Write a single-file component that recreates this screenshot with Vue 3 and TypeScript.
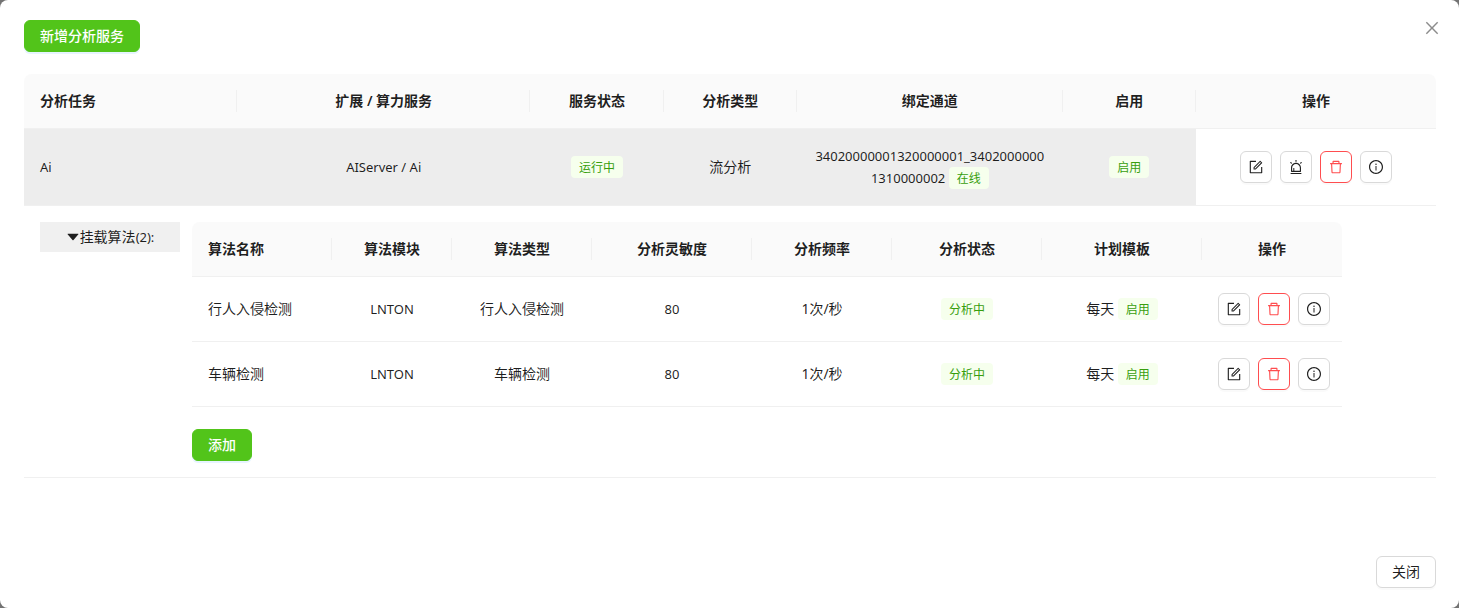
<script setup lang="ts">
import { ref } from 'vue'

type IconName = 'form' | 'alert' | 'delete' | 'info'

interface Action {
  icon: IconName
  label: string
}

interface Algorithm {
  name: string
  module: string
  type: string
  sensitivity: number
  frequency: string
  status: string
  plan: string
  planState: string
}

const icons: Record<IconName, string[]> = {
  form: [
    'M904 512h-56c-4.4 0-8 3.6-8 8v320H184V184h320c4.4 0 8-3.6 8-8v-56c0-4.4-3.6-8-8-8H144c-17.7 0-32 14.3-32 32v736c0 17.7 14.3 32 32 32h736c17.7 0 32-14.3 32-32V520c0-4.4-3.6-8-8-8z',
    'M355.9 534.9L354 653.8c-.1 8.9 7.1 16.2 16 16.2h.4l118-2.9c2-.1 4-.9 5.4-2.3l415.9-415c3.1-3.1 3.1-8.2 0-11.3L785.4 114.3c-1.6-1.6-3.6-2.3-5.7-2.3s-4.1.8-5.7 2.3l-415.8 415a8.3 8.3 0 00-2.3 5.6zm63.5 23.6L779.7 199l45.2 45.1-360.5 359.7-45.7 1.1.7-46.4z',
  ],
  alert: [
    'M193 796c0 17.7 14.3 32 32 32h574c17.7 0 32-14.3 32-32V563c0-176.2-142.8-319-319-319S193 386.8 193 563v233zm72-233c0-136.4 110.6-247 247-247s247 110.6 247 247v193H404V585c0-5.5-4.5-10-10-10h-44c-5.5 0-10 4.5-10 10v171h-75V563zm-48.1-252.5l39.6-39.6c3.1-3.1 3.1-8.2 0-11.3l-67.9-67.9c-3.1-3.1-8.2-3.1-11.3 0l-39.6 39.6a8.03 8.03 0 000 11.3l67.9 67.9c3.1 3.1 8.1 3.1 11.3 0zm669.6-79.2l-39.6-39.6c-3.1-3.1-8.2-3.1-11.3 0l-67.9 67.9a8.03 8.03 0 000 11.3l39.6 39.6c3.1 3.1 8.2 3.1 11.3 0l67.9-67.9c3.1-3.2 3.1-8.2 0-11.3zM832 892H192c-17.7 0-32 14.3-32 32v24c0 4.4 3.6 8 8 8h688c4.4 0 8-3.6 8-8v-24c0-17.7-14.3-32-32-32zM484 180h56c4.4 0 8-3.6 8-8V76c0-4.4-3.6-8-8-8h-56c-4.4 0-8 3.6-8 8v96c0 4.4 3.6 8 8 8z',
  ],
  delete: [
    'M360 184h-8c4.4 0 8-3.6 8-8v8h304v-8c0 4.4 3.6 8 8 8h-8v72h72v-80c0-35.3-28.7-64-64-64H352c-35.3 0-64 28.7-64 64v80h72v-72zm504 72H160c-17.7 0-32 14.3-32 32v32c0 4.4 3.6 8 8 8h60.4l24.7 523c1.6 34.1 29.8 61 63.9 61h454c34.2 0 62.3-26.8 63.9-61l24.7-523H888c4.4 0 8-3.6 8-8v-32c0-17.7-14.3-32-32-32zM731.3 840H292.7l-24.2-512h487l-24.2 512z',
  ],
  info: [
    'M512 64C264.6 64 64 264.6 64 512s200.6 448 448 448 448-200.6 448-448S759.4 64 512 64zm0 820c-205.4 0-372-166.6-372-372s166.6-372 372-372 372 166.6 372 372-166.6 372-372 372z',
    'M464 336a48 48 0 1096 0 48 48 0 10-96 0zm72 112h-48c-4.4 0-8 3.6-8 8v272c0 4.4 3.6 8 8 8h48c4.4 0 8-3.6 8-8V456c0-4.4-3.6-8-8-8z',
  ],
}

const taskActions: Action[] = [
  { icon: 'form', label: '编辑' },
  { icon: 'alert', label: '告警' },
  { icon: 'delete', label: '删除' },
  { icon: 'info', label: '详情' },
]
const algorithmActions = taskActions.filter((a) => a.icon !== 'alert')

const taskColumns = ['分析任务', '扩展 / 算力服务', '服务状态', '分析类型', '绑定通道', '启用', '操作']
const algorithmColumns = ['算法名称', '算法模块', '算法类型', '分析灵敏度', '分析频率', '分析状态', '计划模板', '操作']

const algorithms: Algorithm[] = ['行人入侵检测', '车辆检测'].map((name) => ({
  name,
  module: 'LNTON',
  type: name,
  sensitivity: 80,
  frequency: '1次/秒',
  status: '分析中',
  plan: '每天',
  planState: '启用',
}))

const expanded = ref(true)
</script>

<template>
  <main class="dialog" role="dialog" aria-label="分析服务">
    <header class="dialog-head">
      <button type="button" class="btn primary">新增分析服务</button>
      <button type="button" class="close" aria-label="关闭窗口">
        <svg viewBox="64 64 896 896" width="16" height="16" aria-hidden="true">
          <path d="M799.9 166.3l57.8 57.9L569.9 512l287.8 287.8-57.8 57.9L512 569.9 224.2 857.7l-57.9-57.9L454.1 512 166.3 224.2l57.9-57.9L512 454.1z" />
        </svg>
      </button>
    </header>

    <table class="grid tasks">
      <colgroup>
        <col class="c-task" />
        <col class="c-server" />
        <col class="c-small" />
        <col class="c-small" />
        <col />
        <col class="c-small" />
        <col class="c-actions" />
      </colgroup>
      <thead>
        <tr>
          <th v-for="title in taskColumns" :key="title" scope="col">{{ title }}</th>
        </tr>
      </thead>
      <tbody>
        <tr class="task-row">
          <td class="latin">Ai</td>
          <td class="latin">AIServer / Ai</td>
          <td><span class="tag">运行中</span></td>
          <td>流分析</td>
          <td class="latin channel">34020000001320000001_34020000001310000002 <span class="tag">在线</span></td>
          <td><span class="tag">启用</span></td>
          <td>
            <div class="actions">
              <button
                v-for="action in taskActions"
                :key="action.icon"
                type="button"
                class="icon-btn"
                :class="{ danger: action.icon === 'delete' }"
                :aria-label="action.label"
              >
                <svg viewBox="64 64 896 896" width="14" height="14" aria-hidden="true">
                  <path v-for="d in icons[action.icon]" :key="d" :d="d" />
                </svg>
              </button>
            </div>
          </td>
        </tr>
        <tr>
          <td colspan="7" class="detail-cell">
            <div class="detail">
              <button type="button" class="toggle" :aria-expanded="expanded" @click="expanded = !expanded">
                <svg viewBox="64 64 896 896" width="14" height="14" :class="{ folded: !expanded }" aria-hidden="true">
                  <path d="M840.4 300H183.6c-19.7 0-30.7 20.8-18.5 35l328.4 380.8c9.4 10.9 27.5 10.9 37 0L858.9 335c12.2-14.2 1.1-35-18.5-35z" />
                </svg>
                <span>挂载算法<span class="latin">({{ algorithms.length }}):</span></span>
              </button>
              <div v-if="expanded" class="detail-body">
                <table class="grid algorithms">
                  <colgroup>
                    <col class="w140" />
                    <col class="w120" />
                    <col class="w140" />
                    <col class="w160" />
                    <col class="w140" />
                    <col class="w150" />
                    <col class="w160" />
                    <col class="w140" />
                  </colgroup>
                  <thead>
                    <tr>
                      <th v-for="title in algorithmColumns" :key="title" scope="col">{{ title }}</th>
                    </tr>
                  </thead>
                  <tbody>
                    <tr v-for="item in algorithms" :key="item.name">
                      <td>{{ item.name }}</td>
                      <td class="latin">{{ item.module }}</td>
                      <td>{{ item.type }}</td>
                      <td class="latin">{{ item.sensitivity }}</td>
                      <td>{{ item.frequency }}</td>
                      <td><span class="tag">{{ item.status }}</span></td>
                      <td>{{ item.plan }} <span class="tag">{{ item.planState }}</span></td>
                      <td>
                        <div class="actions">
                          <button
                            v-for="action in algorithmActions"
                            :key="action.icon"
                            type="button"
                            class="icon-btn"
                            :class="{ danger: action.icon === 'delete' }"
                            :aria-label="action.label"
                          >
                            <svg viewBox="64 64 896 896" width="14" height="14" aria-hidden="true">
                              <path v-for="d in icons[action.icon]" :key="d" :d="d" />
                            </svg>
                          </button>
                        </div>
                      </td>
                    </tr>
                  </tbody>
                </table>
                <button type="button" class="btn primary">添加</button>
              </div>
            </div>
          </td>
        </tr>
      </tbody>
    </table>

    <footer class="dialog-foot">
      <button type="button" class="btn">关闭</button>
    </footer>
  </main>
</template>

<style>
body {
  background: #737373;
}
</style>

<style scoped>
.dialog {
  box-sizing: border-box;
  min-height: 100vh;
  display: flex;
  flex-direction: column;
  padding: 20px 23px 20px 24px;
  background: #fff;
  border-radius: 8px;
  color: rgba(0, 0, 0, 0.88);
  font: 14px/22px "Noto Sans", "Noto Sans CJK SC", sans-serif;
}
button {
  font: inherit;
  color: inherit;
  cursor: pointer;
}
svg {
  display: block;
  flex: none;
  fill: currentColor;
}
.dialog-head {
  display: flex;
  justify-content: space-between;
  align-items: flex-start;
  margin-bottom: 22px;
}
.btn {
  box-sizing: border-box;
  height: 32px;
  padding: 0 15px;
  border: 1px solid #d9d9d9;
  border-radius: 6px;
  background: #fff;
  box-shadow: 0 2px 0 rgba(0, 0, 0, 0.02);
}
.btn.primary {
  border-color: #52c41a;
  background: #52c41a;
  color: #fff;
  font-weight: 500;
  box-shadow: 0 2px 0 rgba(5, 145, 255, 0.1);
}
.close {
  padding: 0;
  margin-right: -4px;
  border: 0;
  background: none;
  color: rgba(0, 0, 0, 0.45);
}

.grid {
  table-layout: fixed;
  border-collapse: separate;
  border-spacing: 0;
}
.tasks {
  width: 100%;
}
.c-task { width: 15.1%; }
.c-server { width: 20.75%; }
.c-small { width: 9.45%; }
.c-actions { width: 240px; }
.w120 { width: 120px; }
.w140 { width: 140px; }
.w150 { width: 150px; }
.w160 { width: 160px; }
.algorithms {
  width: 1150px;
  margin-bottom: 22px;
}
th,
td {
  padding: 16px;
  border-bottom: 1px solid #f0f0f0;
  text-align: center;
  overflow-wrap: break-word;
}
th {
  position: relative;
  background: #fafafa;
  font-weight: 600;
}
th:first-child,
td:first-child {
  text-align: left;
}
th:first-child {
  border-top-left-radius: 8px;
}
th:last-child {
  border-top-right-radius: 8px;
}
/* short divider between header cells */
th:not(:last-child)::before {
  content: "";
  position: absolute;
  top: 16px;
  right: 0;
  width: 1px;
  height: 22px;
  background: #f0f0f0;
}
.task-row td:not(:last-child) {
  background: #ededed;
}
.latin {
  font-size: 13px;
}
.channel {
  word-break: break-all;
}
.tag {
  box-sizing: border-box;
  display: inline-block;
  vertical-align: top;
  height: 22px;
  padding: 1px 8px 0;
  border-radius: 4px;
  background: #f6ffed;
  color: #389e0d;
  font-size: 12px;
  line-height: 22px;
  white-space: nowrap;
}
.actions {
  display: flex;
  justify-content: safe center;
  gap: 8px;
}
.icon-btn {
  box-sizing: border-box;
  flex: none;
  display: flex;
  align-items: center;
  justify-content: center;
  width: 32px;
  height: 32px;
  padding: 0;
  border: 1px solid #d9d9d9;
  border-radius: 6px;
  background: #fff;
  box-shadow: 0 2px 0 rgba(0, 0, 0, 0.02);
}
.icon-btn.danger {
  border-color: #ff4d4f;
  color: #ff4d4f;
}

.detail {
  display: flex;
  align-items: flex-start;
  gap: 12px;
}
.toggle {
  flex: none;
  display: flex;
  align-items: center;
  justify-content: center;
  width: 140px;
  height: 30px;
  padding: 0;
  border: 0;
  background: #f0f0f0;
}
.folded {
  transform: rotate(-90deg);
}
.dialog-foot {
  display: flex;
  justify-content: flex-end;
  margin-top: auto;
}
</style>
